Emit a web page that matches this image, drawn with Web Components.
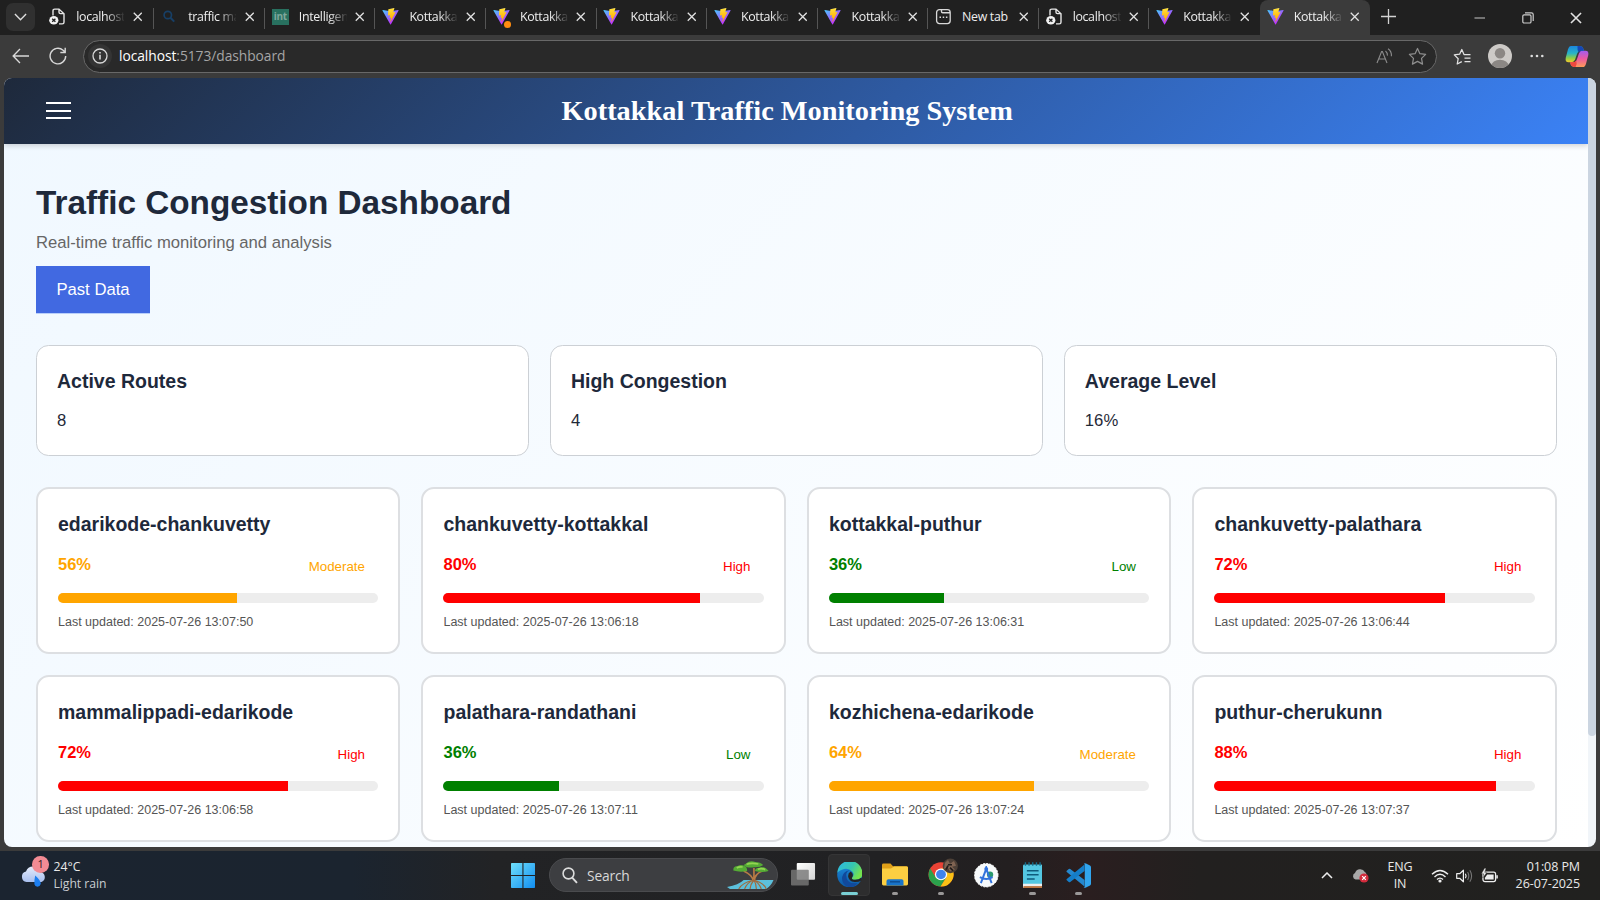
<!DOCTYPE html>
<html lang="en">
<head>
<meta charset="utf-8">
<title>Kottakkal Traffic Monitoring System</title>
<style>
html,body{margin:0;height:100%;overflow:hidden;background:#3b3b3b}
body{font-family:"Open Sans","Noto Sans",sans-serif}
</style>
</head>
<body>
<desktop-screen></desktop-screen>
<script>
const define = (name, html, setup) => customElements.define(name, class extends HTMLElement {
  connectedCallback() {
    if (this.shadowRoot) return;
    const root = this.attachShadow({ mode: 'open' });
    const t = document.createElement('template');
    t.innerHTML = typeof html === 'function' ? html(this) : html;
    root.append(t.content.cloneNode(true));
    if (setup) setup(this, root);
  }
});

const ICONS = {
  vite: ['0 0 410 404', `<defs><linearGradient id="a" x1="6" y1="33" x2="235" y2="344" gradientUnits="userSpaceOnUse"><stop stop-color="#41D1FF"/><stop offset="1" stop-color="#BD34FE"/></linearGradient><linearGradient id="b" x1="194.65" y1="8.8" x2="236" y2="293" gradientUnits="userSpaceOnUse"><stop stop-color="#FFEA83"/><stop offset=".083" stop-color="#FFDD35"/><stop offset="1" stop-color="#FFA800"/></linearGradient></defs><path d="M399.641 59.5246L215.643 388.545C211.844 395.338 202.084 395.378 198.228 388.618L10.5817 59.5563C6.38087 52.1896 12.6802 43.2665 21.0281 44.7586L205.223 77.6824C206.398 77.8924 207.601 77.8904 208.776 77.6763L389.119 44.8058C397.439 43.2894 403.768 52.1434 399.641 59.5246Z" fill="url(#a)"/><path d="M292.965 1.5744L156.801 28.2552C154.563 28.6937 152.906 30.5903 152.771 32.8664L144.395 174.33C144.198 177.662 147.258 180.248 150.51 179.498L188.42 170.749C191.967 169.931 195.172 173.055 194.443 176.622L183.18 231.775C182.422 235.487 185.907 238.661 189.532 237.56L212.947 230.446C216.577 229.344 220.065 232.527 219.297 236.242L201.398 322.875C200.278 328.294 207.486 331.249 210.492 326.603L212.5 323.5L323.454 102.072C325.312 98.3645 322.108 94.137 318.036 94.9228L279.014 102.454C275.347 103.161 272.227 99.746 273.262 96.1583L298.731 7.86689C299.767 4.27314 296.636 0.855181 292.965 1.5744Z" fill="url(#b)"/>`],
  pageerror: ['0 0 17 18', `<path d="M4 8V3Q4 1.2 5.8 1.2H10L15 6V15Q15 16.8 13.2 16.8H10M10 1.2V4.5Q10 6 11.5 6H15" fill="none" stroke="#e6e6e6" stroke-width="1.4"/><circle cx="4.8" cy="13" r="4.6" fill="#f2f2f2"/><path d="M3.2 11.4L6.4 14.6M6.4 11.4L3.2 14.6" stroke="#202020" stroke-width="1.3"/>`],
  lens: ['0 0 17 17', `<circle cx="6.8" cy="7" r="3.7" fill="none" stroke="#173f66" stroke-width="1.7"/><path d="M9.5 9.8L13.2 13.6" stroke="#173f66" stroke-width="2"/>`],
  newtab: ['0 0 17 17', `<rect x="1.6" y="1.6" width="13.6" height="14" rx="2.8" fill="none" stroke="#d8d8d8" stroke-width="1.3"/><path d="M6.5 1.8V3.6Q6.5 4.8 7.7 4.8H15M4.5 9.2H6M7.7 9.2H9.2M10.9 9.2H12.4" fill="none" stroke="#d8d8d8" stroke-width="1.4"/>`],
  close: ['0 0 10 10', `<path d="M.8 .8L9.2 9.2M9.2 .8L.8 9.2" stroke="#e2e2e2" stroke-width="1.35"/>`],
  chevdown: ['0 0 14 8', `<path d="M1 1L7 6.8L13 1" fill="none" stroke="#dedede" stroke-width="1.5"/>`],
  plus: ['0 0 15 15', `<path d="M7.5 0V15M0 7.5H15" stroke="#d2d2d2" stroke-width="1.3"/>`],
  min: ['0 0 12 12', `<path d="M.5 6H11.5" stroke="#b9b9b9" stroke-width="1.1"/>`],
  restore: ['0 0 12 12', `<rect x=".8" y="2.8" width="8.2" height="8.2" rx="1.3" fill="none" stroke="#ccc" stroke-width="1.2"/><path d="M3 .8H9.4Q11.2 .8 11.2 2.6V9" fill="none" stroke="#ccc" stroke-width="1.2"/>`],
  back: ['0 0 18 16', `<path d="M17.5 8H1.2M8.2 1L1.2 8L8.2 15" fill="none" stroke="#d8d8d8" stroke-width="1.4"/>`],
  reload: ['0 0 18 18', `<path d="M16.7 9A7.8 7.8 0 1 1 14.1 3.2L16 5.1M16.2 .8V5.5H11.3" fill="none" stroke="#d8d8d8" stroke-width="1.4"/>`],
  info: ['0 0 24 24', `<circle cx="12" cy="12" r="12" fill="#343434"/><circle cx="12" cy="12" r="7" fill="none" stroke="#d8d8d8" stroke-width="1.3"/><path d="M12 10.8V15.5M12 8V9.6" stroke="#d8d8d8" stroke-width="1.6"/>`],
  read: ['0 0 17 16', `<path d="M1 15L5.6 3.5H6.4L11 15M2.6 11H9.4M9.5 3Q11.6 4.8 11.4 7.6M12 .8Q15.8 3.4 15.4 8.2" fill="none" stroke="#8c8c8c" stroke-width="1.1"/>`],
  star: ['0 0 18 18', `<path d="M9 1.4L11.3 6.3L16.7 7L12.8 10.8L13.8 16.2L9 13.6L4.2 16.2L5.2 10.8L1.3 7L6.7 6.3Z" fill="none" stroke="#8f8f8f" stroke-width="1.15" stroke-linejoin="round"/>`],
  favs: ['0 0 18 17', `<path d="M16.2 6.5H11L8.8 1.5L6.6 6.2L1.3 6.9L5.2 10.7L4.2 16L8.8 13.6M12.2 6.5H17.5M11.5 10H17.5M11.5 13.5H17.5" fill="none" stroke="#e2e2e2" stroke-width="1.25" stroke-linejoin="round"/>`],
  avatar: ['0 0 24 24', `<clipPath id="c"><circle cx="12" cy="12" r="12"/></clipPath><g clip-path="url(#c)"><rect width="24" height="24" fill="#cdcac7"/><circle cx="12" cy="9.2" r="5.2" fill="#8b8784"/><ellipse cx="12" cy="22" rx="8.6" ry="6.2" fill="#8b8784"/></g>`],
  dots: ['0 0 14 4', `<g fill="#ddd"><circle cx="1.7" cy="2" r="1.3"/><circle cx="7" cy="2" r="1.3"/><circle cx="12.3" cy="2" r="1.3"/></g>`],
  copilot: ['0 0 24 24', `<defs><linearGradient id="p" x2="0" y2="1"><stop stop-color="#1b86dd"/><stop offset=".45" stop-color="#27b3c8"/><stop offset=".75" stop-color="#8fce45"/><stop offset="1" stop-color="#f5c92c"/></linearGradient><linearGradient id="q" x2="0" y2="1"><stop stop-color="#a25cf0"/><stop offset=".5" stop-color="#ed5a9f"/><stop offset="1" stop-color="#ff9b57"/></linearGradient></defs><path d="M6 1H15Q17.5 1 18.4 4L19 6H16Q13 6 12 9.5L10 15.5Q9 18 6.5 18H3.5Q0 18 .7 13.5L3 4.5Q4 1 6 1Z" fill="url(#p)"/><path d="M18 23H9Q6.5 23 5.6 20L5.2 18H8Q11 18 12 14.5L14 8.5Q15 6 17.5 6H20.5Q24 6 23.3 10.5L21 19.5Q20 23 18 23Z" fill="url(#q)"/><path d="M12.5 1H15Q17.5 1 18.4 4L19 6H16.5Q14.6 6 13.8 8Q12 5 12.5 1Z" fill="#1747b5"/><path d="M5.2 18H8Q10.2 18 11.2 16.2Q12.4 20 10.6 23H9Q6.5 23 5.6 20Z" fill="#f0483e"/>`],
  weather: ['0 0 26 24', `<defs><linearGradient id="w" x2="0" y2="1"><stop stop-color="#e4ecfb"/><stop offset="1" stop-color="#a9bfee"/></linearGradient></defs><path d="M5.5 18A5.3 5.3 0 0 1 5 7.6A7.5 7.5 0 0 1 19.3 8A5.2 5.2 0 0 1 20.5 18Z" fill="url(#w)"/><path d="M14.2 11.5Q20.5 17 19.6 20.3A3.2 3.2 0 0 1 13.4 20.2Q13 17 14.2 11.5Z" fill="#1c7ef0"/>`],
  windows: ['0 0 24 25', `<defs><linearGradient id="n" x2="1" y2="1"><stop stop-color="#6fe0fc"/><stop offset="1" stop-color="#118df0"/></linearGradient></defs><path d="M0 .8Q0 0 .8 0H11.4V12H0ZM12.5 0H23.2Q24 0 24 .8V12H12.5ZM0 13H11.4V25H.8Q0 25 0 24.2ZM12.5 13H24V24.2Q24 25 23.2 25H12.5Z" fill="url(#n)"/>`],
  search: ['0 0 16 17', `<circle cx="6.5" cy="6.5" r="5.4" fill="none" stroke="#dcdcdc" stroke-width="1.6"/><path d="M10.4 10.8L15 15.8" stroke="#dcdcdc" stroke-width="1.9"/>`],
  tree: ['0 0 48 28', `<path d="M0 26Q12 24 17 19H47.5Q45 25 40 28H3Z" fill="#5cc0dc"/><path d="M27 20Q26 14 17 10M28 20Q28 13 36 10M27.5 7V20" fill="none" stroke="#b97c45" stroke-width="1.7"/><path d="M12 28Q15 22 27 19Q38 22 40 28M18 28Q20 22 27 19Q33 22 35 28M23.5 28Q24 23 27.5 19Q30 23 30 28" fill="none" stroke="#a06a3c" stroke-width="1.2"/><path d="M6.5 9.5Q6 5 11 5Q14 3 18 5Q21 6 20.5 10Q13 11.5 6.5 9.5ZM17 4Q20 2.5 21.5 1Q25 -.5 29 1Q34 1 37 4Q34 6.4 28 6.2Q20 7.5 17 4ZM28.5 10Q29 6.8 33 6.8Q38 4.5 42.5 10Q36 12 28.5 10Z" fill="#55ab35"/><path d="M10 7Q12 5.5 16 6M20 3.3Q25 1.5 32 3M31.5 8.3Q35 6.8 39 8.6" stroke="#94d552" stroke-width="1.7" fill="none"/>`],
  taskview: ['0 0 26 25', `<defs><linearGradient id="t" x2="1" y2="1"><stop stop-color="#fff"/><stop offset="1" stop-color="#d4d4d4"/></linearGradient></defs><rect x="6" y="0" width="19" height="17.5" rx="1" fill="url(#t)"/><rect x="0" y="7" width="18.5" height="16.5" rx="1" fill="#777" fill-opacity=".82"/>`],
  edge: ['0 0 26 26', `<defs><linearGradient id="e1" x2="1" y2=".5"><stop stop-color="#2db8e8"/><stop offset=".6" stop-color="#36c6ae"/><stop offset="1" stop-color="#74e34e"/></linearGradient><linearGradient id="e2" x2="0" y2="1"><stop stop-color="#1c8de0"/><stop offset="1" stop-color="#0c59a4"/></linearGradient></defs><circle cx="13" cy="13" r="12.8" fill="url(#e2)"/><path d="M.4 11A12.7 12.7 0 0 1 25.8 12Q25.8 18.2 18.6 18.2Q14.6 18 15.3 16Q18.4 13 15.5 9.6Q11 5.4 5 8Q1.8 9.2 .4 11Z" fill="url(#e1)"/><path d="M15.3 16Q14.6 18 18.6 18.2Q22.7 18 24.8 15.8Q26 17.6 24.3 19Q22 20.6 18 20.4Q11.8 19.6 11.3 14.5Q11.3 11 14 9.7Q17.6 12.5 15.3 16Z" fill="#232526"/><path d="M9.5 12Q8.6 23 20.8 21.6Q18 25.7 12.6 25.8Q4.4 23.4 5.2 15.4Q6.4 9.4 13 8.4Q10 9.6 9.5 12Z" fill="#11499b"/>`],
  folder: ['0 0 26 24', `<path d="M0 2Q0 .5 1.5 .5H8.5L11 3.2H24.5Q26 3.2 26 4.8V10H0Z" fill="#e0a019"/><path d="M0 5.5H9L12 3.5H24.5Q26 3.5 26 5V21.5Q26 23 24.5 23H1.5Q0 23 0 21.5Z" fill="#fccf42"/><path d="M4.5 23V18.5Q4.5 16.5 6.5 16.5H19.5Q21.5 16.5 21.5 18.5V23Z" fill="#1874ca"/><path d="M8 19.2H18" stroke="#0d4d92" stroke-width="1.5"/>`],
  chrome: ['0 0 30 30', `<circle cx="13" cy="17" r="12.5" fill="#ea4335"/><path d="M2.2 10.8A12.5 12.5 0 0 0 12.6 29.5L18.4 20H7.6Z" fill="#2ba24c"/><path d="M12.6 29.5A12.5 12.5 0 0 0 23.9 10.8H13L18.5 20Z" fill="#fbc116"/><circle cx="13" cy="17" r="6.1" fill="#fff"/><circle cx="13" cy="17" r="4.9" fill="#3f83ed"/><circle cx="22.3" cy="8.2" r="7.6" fill="#4d4037"/><path d="M17 5L20 2L22 6L26 3L28 8L24 9L27 12L22 14L20 10L16 11Z" fill="#806452"/><path d="M20 7H24M22 10L25 13M18 12L20 8" stroke="#211c1b" stroke-width="1.7"/>`],
  android: ['0 0 25 25', `<circle cx="12.5" cy="12.5" r="12" fill="#f7fafb" stroke="#fff" stroke-dasharray="2 1.3"/><circle cx="16.4" cy="12" r="3.2" fill="#2b9a6d"/><path d="M7 20.5L12.5 6L18 20.5M6 14.5Q12.5 18 19 14.5" fill="none" stroke="#3272dc" stroke-width="2"/><circle cx="12.5" cy="6" r="2" fill="#3272dc"/><path d="M12.5 3V5" stroke="#3272dc" stroke-width="1.5"/>`],
  notepad: ['0 0 20 27', `<path d="M0 4Q0 2.5 1.5 2.5H18.5Q20 2.5 20 4V24H0Z" fill="#54c7e2"/><path d="M0 22.5H20V26Q20 27 19 27H1Q0 27 0 26Z" fill="#efefef"/><path d="M.5 26H19.5" stroke="#b26024" stroke-width="1.7"/><path d="M2.5 .2V4M6.2 .2V4M10 .2V4M13.8 .2V4M17.5 .2V4" stroke="#156e8c" stroke-width="1.4"/><path d="M4 9H16M4 13.3H16M4 17.6H12" stroke="#0e5c7d" stroke-width="1.6"/>`],
  vscode: ['0 0 100 100', `<path d="M3 31L11 24Q14 22 17 24L74 68V94L3 36Q0 34 3 31Z" fill="#2488cf"/><path d="M3 69L11 76Q14 78 17 76L74 32V6L3 64Q0 66 3 69Z" fill="#147dc8"/><path d="M70 98Q74 101 80 98L96 90Q100 88 100 83V17Q100 12 96 10L80 2Q74 -1 69 3Q75 -1 75 8V92Q75 101 69 98Z" fill="#31a5ee"/>`],
  chevup: ['0 0 12 7', `<path d="M1 6L6 1L11 6" fill="none" stroke="#eee" stroke-width="1.5"/>`],
  cloud: ['0 0 17 15', `<path d="M3.5 11.5A3.5 3.5 0 0 1 3 5A5.5 5.5 0 0 1 13 4.2Q15 5 14 9L9 11.5Z" fill="#a8a8a8"/><circle cx="12" cy="10" r="4.6" fill="#d22b3c"/><path d="M10.2 8.2L13.8 11.8M13.8 8.2L10.2 11.8" stroke="#fff" stroke-width="1.2"/>`],
  wifi: ['0 0 18 14', `<path d="M1 5.2Q9 -2.4 17 5.2M3.5 8Q9 2.6 14.5 8M6 10.6Q9 7.6 12 10.6" fill="none" stroke="#eee" stroke-width="1.4"/><circle cx="9" cy="12" r="1.6" fill="#eee"/>`],
  speaker: ['0 0 17 14', `<path d="M.7 4.7H3.7L7.4 1.2V12.8L3.7 9.3H.7Z" fill="none" stroke="#eee" stroke-width="1.2" stroke-linejoin="round"/><path d="M9.4 4.8Q10.8 7 9.4 9.2" fill="none" stroke="#eee" stroke-width="1.2"/><path d="M11.6 3Q14 7 11.6 11M13.8 1.3Q17.4 7 13.8 12.7" fill="none" stroke="#777" stroke-width="1.1"/>`],
  battery: ['0 0 18 15', `<rect x="2" y="4.2" width="13" height="9.4" rx="2" fill="none" stroke="#eee" stroke-width="1.3"/><path d="M16.5 7.2V10.6" stroke="#eee" stroke-width="1.6"/><path d="M6.4 6.4H13V11.6H4V9.8Z" fill="#eee"/><path d="M3.6 .3L.4 5.8H2.8L1.8 10L6 4.4H3.8L5.2 .3Z" fill="#eee" stroke="#222120" stroke-width=".4"/>`]
};
define('ui-icon', el => {
  const [box, body] = ICONS[el.getAttribute('name')];
  const w = el.getAttribute('w'), h = el.getAttribute('h');
  return `<style>:host{display:block;flex:none;width:${w}px;height:${h}px}svg{display:block}</style><svg width="${w}" height="${h}" viewBox="${box}" preserveAspectRatio="none">${body}</svg>`;
});

define('browser-tab', el => {
  const icon = el.getAttribute('icon');
  const fav = icon === 'int'
    ? '<span class="int">int</span>'
    : `<ui-icon name="${icon}" w="17" h="17"></ui-icon>`;
  return `<style>
  :host{display:flex;align-items:center;box-sizing:border-box;flex:none;width:110.55px;height:35px;padding:0 0 2px 6.8px;position:relative;border-right:1px solid transparent}
  :host::after{content:"";position:absolute;right:-1px;top:8px;height:21px;width:1px;background:#555}
  :host([active]){background:#3b3b3b;border-radius:8px 8px 0 0}
  :host([active])::after,:host([last])::after{display:none}
  .fav{position:relative;width:17px;margin-right:10.1px}
  .int{display:block;background:#28705f;color:#7fa79c;font:700 10px/15px "Open Sans",sans-serif;height:16px;text-align:center;letter-spacing:-.3px}
  .dot{position:absolute;right:-1px;bottom:-3px;width:7px;height:7px;border-radius:50%;background:#ff8c10}
  .t{width:48px;overflow:hidden;white-space:nowrap;color:#eee;font-size:12.4px;line-height:18px;letter-spacing:-.35px;-webkit-mask-image:linear-gradient(90deg,#000 62%,transparent 103%);mask-image:linear-gradient(90deg,#000 62%,transparent 103%)}
  .t.full{-webkit-mask-image:none;mask-image:none}
  ui-icon.x{margin-left:8.5px;margin-top:1px}
  </style><div class="fav">${fav}${el.hasAttribute('alert') ? '<span class="dot"></span>' : ''}</div><div class="t ${icon === 'newtab' ? 'full' : ''}"><slot></slot></div><ui-icon class="x" name="close" w="9.5" h="9.5"></ui-icon>`;
});

define('tab-strip', `<style>
  :host{display:flex;height:35px;background:#202020;align-items:center}
  .menu{width:29px;height:28px;border-radius:7px;background:#303030;margin:0 7.4px 1px 6px;display:grid;place-items:center}
  .first{width:112px}
  .plus{margin:0 0 3px 11px}
  .win{margin-left:auto;display:flex;gap:36.5px;padding-right:18px}
  </style>
  <div class="menu"><ui-icon name="chevdown" w="13" h="8"></ui-icon></div>
  <browser-tab class="first" icon="pageerror">localhost</browser-tab>
  <browser-tab icon="lens">traffic ma</browser-tab>
  <browser-tab icon="int">Intelligen</browser-tab>
  <browser-tab icon="vite">Kottakkal</browser-tab>
  <browser-tab icon="vite" alert>Kottakkal</browser-tab>
  <browser-tab icon="vite">Kottakkal</browser-tab>
  <browser-tab icon="vite">Kottakkal</browser-tab>
  <browser-tab icon="vite">Kottakkal</browser-tab>
  <browser-tab icon="newtab">New tab</browser-tab>
  <browser-tab icon="pageerror">localhost</browser-tab>
  <browser-tab icon="vite" last>Kottakkal</browser-tab>
  <browser-tab icon="vite" active>Kottakkal</browser-tab>
  <ui-icon class="plus" name="plus" w="15" h="15"></ui-icon>
  <div class="win"><ui-icon name="min" w="11.5" h="12"></ui-icon><ui-icon name="restore" w="12" h="12"></ui-icon><ui-icon name="close" w="12" h="12"></ui-icon></div>`);

define('tool-bar', `<style>
  :host{display:flex;height:42.5px;background:#3b3b3b;align-items:center;box-sizing:border-box}
  .back{margin-left:12px}.reload{margin-left:19.8px}
  .url{margin-left:16px;width:1353.5px;height:33px;box-sizing:border-box;border:1px solid #686868;border-radius:17px;background:#292929;display:flex;align-items:center;padding:0 9px 0 3.5px;color:#a5a5a5;font-size:13.8px;letter-spacing:-.05px}
  .addr{margin-left:7.2px;line-height:20px}
  b{font-weight:400;color:#fff}
  .read{margin-left:auto;margin-right:14.5px}
  .favs{margin-left:16px}.avatar{margin-left:17px}.dots{margin-left:18.5px}.cop{margin-left:20.5px}
  </style>
  <ui-icon class="back" name="back" w="17.5" h="16"></ui-icon>
  <ui-icon class="reload" name="reload" w="18" h="18"></ui-icon>
  <div class="url"><ui-icon name="info" w="24" h="24"></ui-icon><span class="addr"><b>localhost</b>:5173/dashboard</span>
  <ui-icon class="read" name="read" w="17" h="16"></ui-icon><ui-icon name="star" w="19" h="19"></ui-icon></div>
  <ui-icon class="favs" name="favs" w="18" h="17"></ui-icon>
  <ui-icon class="avatar" name="avatar" w="24" h="24"></ui-icon>
  <ui-icon class="dots" name="dots" w="14" h="4"></ui-icon>
  <ui-icon class="cop" name="copilot" w="24" h="23"></ui-icon>`);

define('site-header', `<style>
  :host{display:grid;grid-template-columns:83px 1fr 100px;align-items:center;height:66.5px;background:linear-gradient(135deg,#1e293b,#3b82f6);box-shadow:0 2px 5px rgba(0,0,0,.16);position:relative}
  .menu{margin-left:42px;width:24.6px;display:grid;gap:5.4px}
  .menu i{height:2px;background:#fff}
  h1{margin:0;text-align:center;color:#fff;font:700 28.33px/34px "Liberation Serif",serif}
  </style><div class="menu"><i></i><i></i><i></i></div><h1><slot></slot></h1><span></span>`);

define('stat-card', el => `<style>
  :host{display:block;box-sizing:border-box;height:111px;border:1px solid #ccd0d5;border-radius:12.5px;background:#fff;padding:23px 20px 0;color:#1f2937}
  h3{margin:0;font-size:19.5px;line-height:24px;color:#1e293b}
  p{margin:17.5px 0 0;font-size:16.67px;line-height:22px}
  </style><h3>${el.getAttribute('label')}</h3><p><slot></slot></p>`);

define('route-card', el => {
  const v = el.getAttribute('value'), s = el.getAttribute('status');
  const c = { Low: 'green', Moderate: 'orange', High: 'red' }[s];
  return `<style>
  :host{display:block;box-sizing:border-box;height:166.6px;border:2px solid #dddfe2;border-radius:13px;background:#fff;padding:23.2px 20px 0;--c:${c}}
  h3{margin:0;font-size:19.5px;line-height:24px;color:#1e293b;white-space:nowrap}
  .row{display:flex;justify-content:space-between;align-items:baseline;margin-top:15.8px;height:24px;line-height:24px;color:var(--c);padding-right:13.1px}
  .row b{font-size:16.5px}.row span{font-size:13.33px;position:relative;top:1px}
  .bar{margin-top:16.8px;height:10.4px;border-radius:6px;background:#ededed;overflow:hidden}
  .bar i{display:block;height:100%;width:${v}%;background:var(--c)}
  p{margin:9.3px 0 0;font-size:12.5px;line-height:18px;color:#555}
  </style><h3><slot></slot></h3><div class="row"><b>${v}%</b><span>${s}</span></div><div class="bar"><i></i></div><p>Last updated: 2025-07-26 ${el.getAttribute('time')}</p>`;
});

const ROUTES = [
  ['edarikode-chankuvetty', 56, 'Moderate', '13:07:50'], ['chankuvetty-kottakkal', 80, 'High', '13:06:18'],
  ['kottakkal-puthur', 36, 'Low', '13:06:31'], ['chankuvetty-palathara', 72, 'High', '13:06:44'],
  ['mammalippadi-edarikode', 72, 'High', '13:06:58'], ['palathara-randathani', 36, 'Low', '13:07:11'],
  ['kozhichena-edarikode', 64, 'Moderate', '13:07:24'], ['puthur-cherukunn', 88, 'High', '13:07:37']
];
define('traffic-dashboard', `<style>
  :host{display:block;padding:38px 31px 0 32px;font-family:"Liberation Sans",Arial,sans-serif}
  h2{margin:0;font-size:33.3px;line-height:42px;color:#1e293b;white-space:nowrap}
  .sub{margin:7.5px 0 0;font-size:16.67px;line-height:22px;color:#666}
  button{display:block;margin:12.3px 0 0;width:114px;height:47px;border:0;padding:2px 0 0;background:#4169e1;color:#fff;font:16.67px "Liberation Sans",Arial,sans-serif;box-shadow:0 1px 0 #b9cffa}
  .stats{display:grid;grid-template-columns:repeat(3,1fr);gap:21px;margin:32px -.3px 0 0}
  .routes{display:grid;grid-template-columns:repeat(4,1fr);gap:21.4px;margin-top:31.5px}
  </style>
  <h2>Traffic Congestion Dashboard</h2>
  <p class="sub">Real-time traffic monitoring and analysis</p>
  <button>Past Data</button>
  <div class="stats"><stat-card label="Active Routes">8</stat-card><stat-card label="High Congestion">4</stat-card><stat-card label="Average Level">16%</stat-card></div>
  <div class="routes">${ROUTES.map(r => `<route-card value="${r[1]}" status="${r[2]}" time="${r[3]}">${r[0]}</route-card>`).join('')}</div>`);

define('web-page', `<style>
  :host{display:flex;margin:0 4px;height:769.5px;border-radius:8px;overflow:hidden}
  .view{width:1583.5px;height:100%;overflow:hidden;background:linear-gradient(135deg,#f0f8ff,#fff)}
  .bar{flex:1;background:#f1f5f9}
  .thumb{height:658px;background:#cbd5e1;border-radius:0 0 5px 5px}
  </style><div class="view"><site-header>Kottakkal Traffic Monitoring System</site-header><traffic-dashboard></traffic-dashboard></div><div class="bar"><div class="thumb"></div></div>`);

define('task-app', el => `<style>
  :host{display:flex;flex:none;flex-direction:column;align-items:center;justify-content:center;position:relative;width:45.8px;height:49px;box-sizing:border-box}
  :host([active])::before{content:"";position:absolute;inset:3px 2px 4px;border-radius:4px;background:#2d2d2e;border:1px solid #353536}
  ui-icon{position:relative;top:${el.getAttribute('dy') || 0}px;left:${el.getAttribute('dx') || 0}px}
  .m{position:absolute;left:50%;top:40.5px;height:3.4px;width:6.5px;margin-left:-3.2px;border-radius:2px;background:#9a9898}
  :host([active]) .m{width:16.5px;margin-left:-8.2px;background:#79cfd4}
  </style><ui-icon name="${el.getAttribute('icon')}" w="${el.getAttribute('w')}" h="${el.getAttribute('h')}"></ui-icon>${el.hasAttribute('open') ? '<span class="m"></span>' : ''}`);

define('task-bar', `<style>
  :host{display:flex;align-items:center;height:49px;box-sizing:border-box;background:linear-gradient(90deg,#1b2430 0,#1b242f 22%,#222325 31%,#212123 55%,#231f20 63%,#2a1e1f 68%,#22201f 75%,#21211f 100%);color:#e9e9e9;font-size:12.2px;line-height:17px;white-space:nowrap}
  .weather{display:flex;width:500.1px;align-items:center}
  .wi{position:relative;width:26px;margin:0 6.8px 0 20.7px}
  .badge{position:absolute;left:11.7px;top:-7.5px;width:16.5px;height:16.5px;border-radius:50%;background:#f28b94;color:#32191c;font-size:11px;line-height:16px;text-align:center}
  .weather p,.tray p{margin:0}
  .weather>div+div,.eng,.time{padding-bottom:2px}
  .weather p+p{color:#c9cdd1;letter-spacing:-.05px}
  .search{display:flex;align-items:center;box-sizing:border-box;margin:0 2.6px 1px 3.3px;width:228.8px;height:34px;border-radius:17px;border:1px solid #4a4b4e;background:#3d3e41;padding:0 3px 0 11.4px;font-size:13.8px;color:#d8d8d8}
  .search span{margin:0 auto 0 9.5px;letter-spacing:-.2px}
  .tray{margin-left:auto;display:flex;align-items:center;padding-right:20px;font-size:12.5px}
  .eng{width:27px;text-align:center;margin:0 17px 0 18px;letter-spacing:-.1px}
  .time{text-align:right;margin-left:16px;width:66px}
  .time p{display:flex;justify-content:flex-end;letter-spacing:-.08px}
  </style>
  <div class="weather"><div class="wi"><ui-icon name="weather" w="26" h="24"></ui-icon><span class="badge">1</span></div><div><p>24°C</p><p>Light rain</p></div></div>
  <task-app icon="windows" w="24" h="25"></task-app>
  <div class="search"><ui-icon name="search" w="16" h="17"></ui-icon><span>Search</span><ui-icon name="tree" w="47" h="28"></ui-icon></div>
  <task-app icon="taskview" w="25" h="24" dx=".4" dy="-.5"></task-app>
  <task-app icon="edge" w="25.5" h="25.5" dy="-1" active open></task-app>
  <task-app icon="folder" w="26" h="23.5" dy="-.5" open></task-app>
  <task-app icon="chrome" w="30" h="29" dx="1.7" dy="-2.7" open></task-app>
  <task-app icon="android" w="24.5" h="24.5"></task-app>
  <task-app icon="notepad" w="19.5" h="26" dy="-.5" open></task-app>
  <task-app icon="vscode" w="25" h="25" dy="-.5" open></task-app>
  <div class="tray"><ui-icon name="chevup" w="12" h="7"></ui-icon><ui-icon name="cloud" w="17" h="15" style="margin-left:19px"></ui-icon>
  <div class="eng"><p>ENG</p><p>IN</p></div>
  <ui-icon name="wifi" w="18" h="14"></ui-icon><ui-icon name="speaker" w="17" h="14" style="margin-left:7px"></ui-icon><ui-icon name="battery" w="17.5" h="15" style="margin-left:8px"></ui-icon>
  <div class="time"><p>01:08 PM</p><p>26-07-2025</p></div></div>`);

define('desktop-screen', `<style>:host{display:flex;flex-direction:column;width:1600px;height:900px;background:#3b3b3b;overflow:hidden}task-bar{margin-top:auto}</style>
  <tab-strip></tab-strip><tool-bar></tool-bar><web-page></web-page><task-bar></task-bar>`);
</script>
</body>
</html>
